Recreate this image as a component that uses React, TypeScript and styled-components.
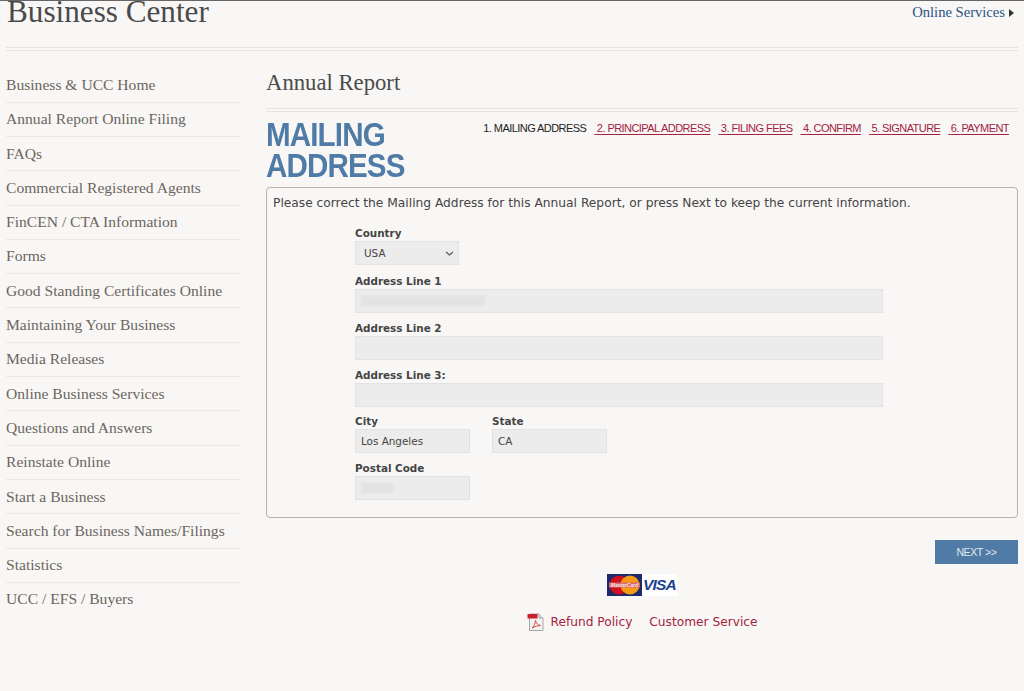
import styled, { createGlobalStyle } from 'styled-components'

const navItems = [
    'Business & UCC Home',
    'Annual Report Online Filing',
    'FAQs',
    'Commercial Registered Agents',
    'FinCEN / CTA Information',
    'Forms',
    'Good Standing Certificates Online',
    'Maintaining Your Business',
    'Media Releases',
    'Online Business Services',
    'Questions and Answers',
    'Reinstate Online',
    'Start a Business',
    'Search for Business Names/Filings',
    'Statistics',
    'UCC / EFS / Buyers',
]

const steps = ['2. PRINCIPAL ADDRESS', '3. FILING FEES', '4. CONFIRM', '5. SIGNATURE', '6. PAYMENT']

const chevron =
    "data:image/svg+xml,%3Csvg xmlns='http://www.w3.org/2000/svg' width='9' height='5' viewBox='0 0 9 5'%3E%3Cpath d='M1 1l3.500 3 3.500-3' fill='none' stroke='%23555' stroke-width='1.1'/%3E%3C/svg%3E"

const App = () => (
    <Page>
        <GlobalStyle />
        <Header>
            <SiteTitle>Business Center</SiteTitle>
            <ServicesLink>
                Online Services
                <Arrow />
            </ServicesLink>
        </Header>
        <DoubleRule />
        <Columns>
            <Sidebar>
                {navItems.map(item => (
                    <NavItem key={item}>{item}</NavItem>
                ))}
            </Sidebar>
            <Main>
                <PageTitle>Annual Report</PageTitle>
                <MainRule />
                <StepRow>
                    <StepHeading>
                        MAILING
                        <br />
                        ADDRESS
                    </StepHeading>
                    <StepNav>
                        <CurrentStep>1. MAILING ADDRESS</CurrentStep>
                        {steps.map(step => (
                            <StepLink key={step}>&nbsp;{step}</StepLink>
                        ))}
                    </StepNav>
                </StepRow>
                <FormPanel>
                    <Intro>
                        Please correct the Mailing Address for this Annual Report, or press Next to
                        keep the current information.
                    </Intro>
                    <FormBody>
                        <FieldLabel>Country</FieldLabel>
                        <CountrySelect defaultValue="USA">
                            <option>USA</option>
                        </CountrySelect>
                        <FieldLabel>Address Line 1</FieldLabel>
                        <WideInput>
                            <Redacted $width={124} />
                        </WideInput>
                        <FieldLabel>Address Line 2</FieldLabel>
                        <WideInput />
                        <FieldLabel>Address Line 3:</FieldLabel>
                        <WideInput />
                        <CityRow>
                            <div>
                                <FieldLabel>City</FieldLabel>
                                <ShortInput>Los Angeles</ShortInput>
                            </div>
                            <div>
                                <FieldLabel>State</FieldLabel>
                                <ShortInput>CA</ShortInput>
                            </div>
                        </CityRow>
                        <FieldLabel>Postal Code</FieldLabel>
                        <ShortInput>
                            <Redacted $width={33} />
                        </ShortInput>
                    </FormBody>
                </FormPanel>
                <ButtonRow>
                    <NextButton>NEXT &gt;&gt;</NextButton>
                </ButtonRow>
                <Cards>
                    <svg width="35" height="22" viewBox="0 0 35 22">
                        <rect width="35" height="22" fill="#1a2a6b" />
                        <circle cx="12" cy="11" r="9.5" fill="#d01020" />
                        <circle cx="23" cy="11" r="9.5" fill="#f59a14" />
                        <rect x="2" y="8.500" width="31" height="5" fill="#d9686a" />
                        <text
                            x="17.500"
                            y="12.800"
                            fontFamily="Liberation Sans, sans-serif"
                            fontSize="5"
                            fontWeight="700"
                            fontStyle="italic"
                            textAnchor="middle"
                            fill="#f6e6e0"
                        >
                            MasterCard
                        </text>
                    </svg>
                    <VisaMark>VISA</VisaMark>
                </Cards>
                <FooterLinks>
                    <FooterLink>
                        <svg width="18" height="18" viewBox="0 0 18 18">
                            <path d="M2.500 1h9.500l4 4v12.500h-13.500z" fill="#f4f2f0" stroke="#a8a8a8" />
                            <path d="M12 1v4h4" fill="#ddd" stroke="#a8a8a8" />
                            <rect x="0.500" y="1" width="10" height="4.500" fill="#c8202c" />
                            <path
                                d="M5 15c2-2 3.500-5 3.500-7.500 1 3 2.500 4.500 5 5-2.500 0-5.500 1-8.500 2.500z"
                                fill="none"
                                stroke="#d04848"
                            />
                        </svg>
                        Refund Policy
                    </FooterLink>
                    <FooterLink>Customer Service</FooterLink>
                </FooterLinks>
            </Main>
        </Columns>
    </Page>
)

const GlobalStyle = createGlobalStyle`
    html, body {
        margin: 0;
        height: 100%;
        background: #f9f7f5;
    }
`

const Page = styled.div`
    height: 691px;
    overflow: hidden;
    border-top: 1px solid #666;
    box-sizing: border-box;
    padding: 0 6px;
    font-family: "Liberation Serif", serif;
`

const Header = styled.header`
    display: flex;
    justify-content: space-between;
    align-items: flex-start;
    height: 46px;
    margin-right: -6px;
`

const SiteTitle = styled.h1`
    margin: -7px 0 0 1px;
    font-size: 31.2px;
    line-height: 36px;
    font-weight: 400;
    white-space: nowrap;
    color: #4a4a4a;
`

const ServicesLink = styled.a`
    display: flex;
    align-items: center;
    gap: 4px;
    margin: 3px 10px 0 0;
    font-size: 14.6px;
    line-height: 17px;
    color: #2a5584;
`

const Arrow = styled.span`
    width: 0;
    height: 0;
    border-left: 5px solid #333;
    border-top: 4px solid transparent;
    border-bottom: 4px solid transparent;
`

const DoubleRule = styled.div`
    height: 2px;
    border-top: 1px solid #e6e4e2;
    border-bottom: 1px solid #e6e4e2;
`

const Columns = styled.div`
    display: flex;
    gap: 26px;
`

const Sidebar = styled.nav`
    flex: 0 0 234px;
    padding-top: 17.4px;
`

const NavItem = styled.a`
    display: block;
    height: 34.3px;
    box-sizing: border-box;
    padding-top: 7.6px;
    border-bottom: 1px solid #ebe9e7;
    font-size: 15.6px;
    line-height: 18px;
    color: #6b6660;

    &:last-child {
        border-bottom: 0;
    }
`

const Main = styled.main`
    flex: 1;
    min-width: 0;
`

const PageTitle = styled.h2`
    margin: 19px 0 0;
    font-size: 22.7px;
    line-height: 26px;
    font-weight: 400;
    color: #4a4a4a;
`

const MainRule = styled(DoubleRule)`
    margin-top: 12px;
`

const StepRow = styled.div`
    display: flex;
    justify-content: space-between;
    align-items: flex-start;
    height: 75px;
    padding-right: 9px;
`

const StepHeading = styled.div`
    width: 140px;
    flex: none;
    margin-top: 7px;
    font-family: "Liberation Sans", sans-serif;
    font-size: 34px;
    line-height: 31px;
    font-weight: 700;
    letter-spacing: -1px;
    white-space: nowrap;
    transform: scaleX(0.87);
    transform-origin: left top;
    color: #4f7ba6;
`

const StepNav = styled.div`
    display: flex;
    gap: 8px;
    margin-top: 9px;
    font-family: "Liberation Sans", sans-serif;
    font-size: 11px;
    line-height: 15px;
    letter-spacing: -0.56px;
    white-space: nowrap;
`

const CurrentStep = styled.span`
    color: #222;
`

const StepLink = styled.a`
    color: #a3233f;
    text-decoration: underline;
    text-underline-offset: 2px;
`

const FormPanel = styled.section`
    height: 331px;
    box-sizing: border-box;
    border: 1px solid #b5b3b1;
    border-radius: 4px;
    padding: 8px 6px;
    font-family: "DejaVu Sans", sans-serif;
`

const Intro = styled.p`
    margin: 0;
    font-size: 12.24px;
    line-height: 15px;
    color: #444;
`

const FormBody = styled.div`
    width: 528px;
    margin: 15px 0 0 82px;
`

const FieldLabel = styled.label`
    display: block;
    height: 15px;
    font-size: 10.4px;
    line-height: 15px;
    font-weight: 700;
    color: #444;
`

const CountrySelect = styled.select`
    display: block;
    width: 104px;
    height: 24px;
    margin-bottom: 9px;
    padding: 0 8px;
    appearance: none;
    background: #ececec url("${chevron}") no-repeat right 4px center;
    border: 1px solid #e2e2e2;
    border-radius: 0;
    font-family: "DejaVu Sans", sans-serif;
    font-size: 10.4px;
    color: #444;
`

const WideInput = styled.div`
    display: flex;
    align-items: center;
    height: 24px;
    margin-bottom: 7.8px;
    padding: 0 5px;
    box-sizing: border-box;
    background: #ececec;
    border: 1px solid #e2e2e2;
    font-size: 10.4px;
    color: #444;
`

const ShortInput = styled(WideInput)`
    width: 115px;
`

const Redacted = styled.span<{ $width: number }>`
    display: block;
    width: ${p => p.$width}px;
    height: 10px;
    background: #e3e3e3;
    filter: blur(1px);
`

const CityRow = styled.div`
    display: flex;
    gap: 22px;
`

const ButtonRow = styled.div`
    display: flex;
    justify-content: flex-end;
    margin-top: 22px;
`

const NextButton = styled.button`
    width: 83px;
    height: 24px;
    padding: 0;
    background: #4f7ba6;
    border: 0;
    font-family: "Liberation Sans", sans-serif;
    font-size: 10.5px;
    letter-spacing: -0.4px;
    color: #e4e8ee;
`

const Cards = styled.div`
    display: flex;
    justify-content: center;
    align-items: center;
    margin-top: 10px;
    height: 22px;
`

const VisaMark = styled.span`
    width: 35px;
    height: 22px;
    background: #fff;
    font-family: "Liberation Sans", sans-serif;
    font-size: 15.5px;
    line-height: 22px;
    font-weight: 700;
    font-style: italic;
    letter-spacing: -0.8px;
    text-align: center;
    color: #1c3f8c;
`

const FooterLinks = styled.div`
    display: flex;
    justify-content: center;
    gap: 17px;
    margin-top: 17px;
    font-family: "DejaVu Sans", sans-serif;
    font-size: 12.2px;
    line-height: 18px;
    color: #a3233f;
`

const FooterLink = styled.a`
    display: flex;
    align-items: center;
    gap: 6px;
`

export default App
